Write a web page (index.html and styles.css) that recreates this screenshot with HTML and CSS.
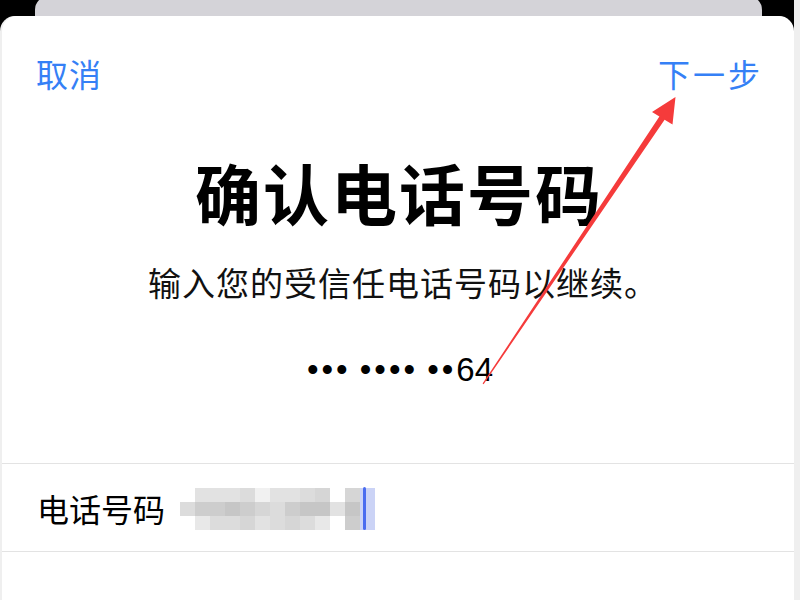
FILE: index.html
```html
<!DOCTYPE html>
<html lang="zh-CN">
<head>
<meta charset="utf-8">
<title>确认电话号码</title>
<link rel="stylesheet" href="styles.css">
</head>
<body>
<div class="screen">
  <div class="main">
    <div class="back-card"></div>
    <div class="sheet">
      <div class="nav">
        <span class="nav-btn">取消</span>
        <span class="nav-btn next">下一步</span>
      </div>
      <h1 class="title">确认电话号码</h1>
      <p class="subtitle">输入您的受信任电话号码以继续。</p>
      <p class="masked"><span class="dots">•••</span> <span class="dots">••••</span> <span class="dots">••</span>64</p>
      <div class="fields">
        <div class="field-row">
          <span class="field-label">电话号码</span>
          <div class="mosaic">
            <i class="c0"></i><i class="c3"></i><i class="c3"></i><i class="c3"></i><i class="c4"></i><i class="c1"></i><i class="c3"></i><i class="c3"></i><i class="c4"></i><i class="c5"></i><i class="c0"></i><i class="c5"></i><i class="blue"></i>
            <i class="c4"></i><i class="c6"></i><i class="c6"></i><i class="c7"></i><i class="c6"></i><i class="c5"></i><i class="c4"></i><i class="c6"></i><i class="c7"></i><i class="c7"></i><i class="c3"></i><i class="c7"></i><i class="blue"></i>
            <i class="c0"></i><i class="c2"></i><i class="c4"></i><i class="c4"></i><i class="c5"></i><i class="c3"></i><i class="c4"></i><i class="c5"></i><i class="c4"></i><i class="c2"></i><i class="c0"></i><i class="c6"></i><i class="blue"></i>
            <span class="cursor"></span>
          </div>
        </div>
      </div>
    </div>
  </div>
  <div class="edge"></div>
</div>
<svg class="arrow" width="800" height="600" viewBox="0 0 800 600" xmlns="http://www.w3.org/2000/svg">
  <polygon points="482.6,383.6 659.4,116.4 652,112 675.5,97 672.5,124.5 664.6,119.8 483.6,384.2" fill="#f53b3b"/>
</svg>
</body>
</html>
```
FILE: styles.css
```css
* { box-sizing: border-box; }
html, body { margin: 0; padding: 0; }
body {
  width: 800px;
  height: 600px;
  overflow: hidden;
  background: #000;
  font-family: "Noto Sans CJK SC", "Noto Sans", sans-serif;
  position: relative;
}
.screen {
  display: flex;
  width: 800px;
  height: 600px;
}
.main {
  width: 794px;
  height: 600px;
  overflow: hidden;
  background: #000;
  display: flex;
  flex-direction: column;
}
.edge {
  width: 6px;
  height: 600px;
  background: #efefef;
}
.back-card {
  height: 20px;
  margin: -4px 32px 0 35px;
  flex: none;
  background: #d4d3d8;
  border-radius: 14px 14px 0 0;
}
.sheet {
  flex: 1;
  margin-left: 2px;
  background: #fff;
  border-radius: 15px 15px 0 0;
  box-shadow: -2px 0 0 #efefef;
}
.nav {
  display: flex;
  justify-content: space-between;
  padding: 37px 31px 0 34px;
  font-size: 32px;
  line-height: 40px;
  color: #3580f6;
}
.nav-btn { letter-spacing: 1px; }
.nav-btn.next { letter-spacing: 3px; }
.title {
  margin: 58px 0 0;
  font-size: 66px;
  line-height: 80px;
  font-weight: 700;
  text-align: center;
  letter-spacing: 2px;
  padding-left: 2px;
  color: #000;
}
.subtitle {
  margin: 31px 0 0;
  padding-left: 10px;
  font-size: 33px;
  line-height: 40px;
  text-align: center;
  letter-spacing: 1px;
  color: #111;
}
.masked {
  margin: 48px 0 0;
  font-family: "Liberation Sans", sans-serif;
  font-size: 33px;
  line-height: 40px;
  text-align: center;
  color: #000;
  padding-left: 4px;
}
.dots { letter-spacing: 3px; }
.fields {
  margin-top: 73px;
  border-top: 1px solid #e3e3e3;
}
.field-row {
  height: 88px;
  border-bottom: 1px solid #e3e3e3;
  display: flex;
  align-items: center;
  padding-left: 35px;
}
.field-label {
  font-size: 32px;
  line-height: 40px;
  color: #000;
}
.mosaic {
  position: relative;
  margin: 2px 0 0 15px;
  display: grid;
  grid-template-columns: repeat(13, 15px);
  grid-template-rows: repeat(3, 14px);
}
.mosaic i { display: block; }
.c0 { background: #ffffff; }
.c1 { background: #f1f1f1; }
.c2 { background: #e8e8e8; }
.c3 { background: #e2e2e2; }
.c4 { background: #dcdcdc; }
.c5 { background: #d6d6d6; }
.c6 { background: #cdcdcd; }
.c7 { background: #c6c6c6; }
.blue { background: #cbd3f6; }
.cursor {
  position: absolute;
  left: 183px;
  top: -1px;
  width: 3px;
  height: 43px;
  border-radius: 2px;
  background: #4a6cf0;
}
.arrow {
  position: absolute;
  left: 0;
  top: 0;
  pointer-events: none;
}
```
